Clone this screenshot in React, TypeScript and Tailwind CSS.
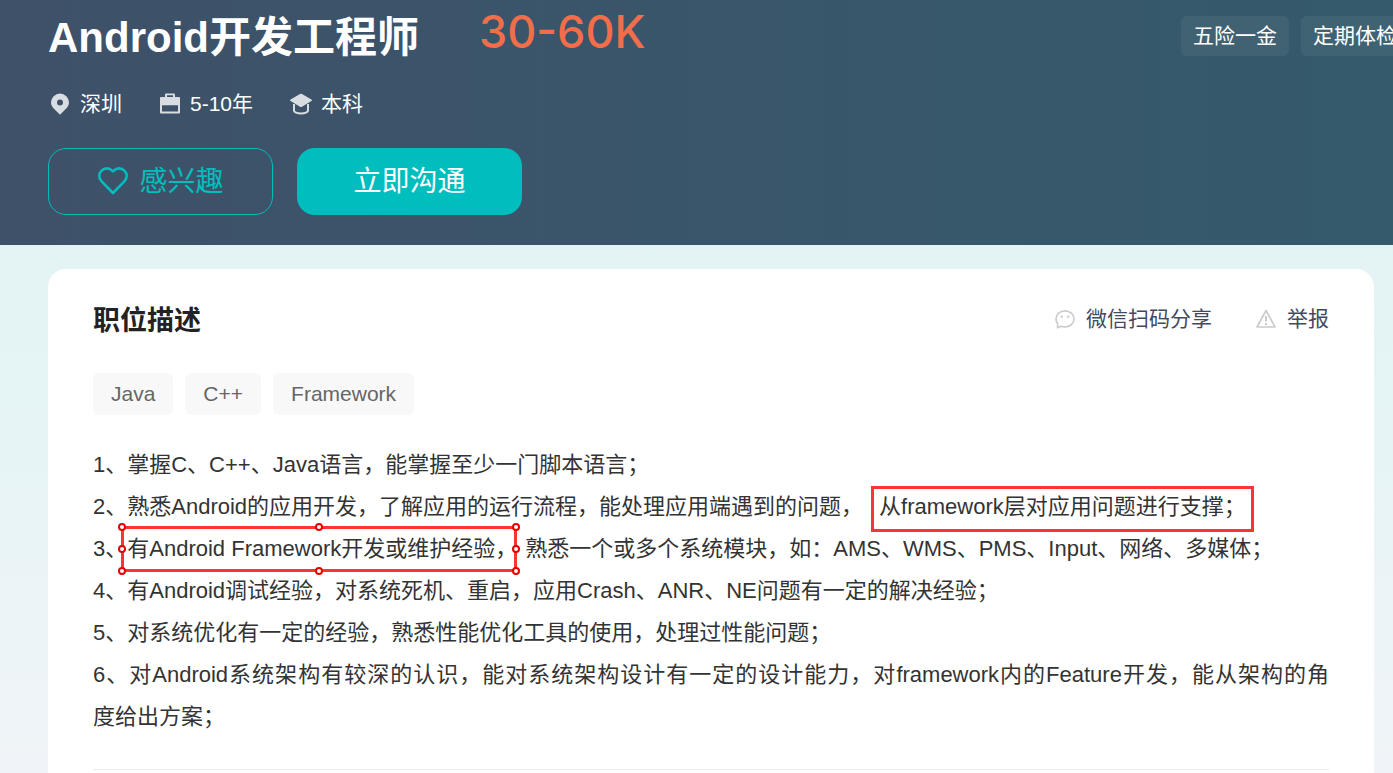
import type { ReactNode } from "react";

const benefits = ["五险一金", "定期体检"];
const skills = ["Java", "C++", "Framework"];

const handles = [
  "left-0 top-0",
  "left-1/2 top-0",
  "left-full top-0",
  "left-0 top-1/2",
  "left-full top-1/2",
  "left-0 top-full",
  "left-1/2 top-full",
  "left-full top-full",
];

function Marked({ children, active }: { children: ReactNode; active?: boolean }) {
  return (
    <span className={`relative inline-block ${active ? "mr-2" : "ml-4"}`}>
      {children}
      <span
        className={`pointer-events-none absolute border-3 border-[#fb3436] ${
          active ? "-inset-y-0.5 right-0 -left-1.5" : "-inset-x-2 top-0 -bottom-1"
        }`}
      >
        {active && (
          <span className="absolute -inset-0.5">
            {handles.map((place) => (
              <span
                key={place}
                className={`absolute size-2 -translate-1/2 rounded-full border-2 border-[#e60000] bg-white ${place}`}
              />
            ))}
          </span>
        )}
      </span>
    </span>
  );
}

function PinIcon() {
  return (
    <svg viewBox="0 0 24 24" className="size-6 fill-[#d8dde2]" aria-hidden="true">
      <path
        fillRule="evenodd"
        d="M12 1.500a9 9 0 0 0-9 9c0 4 3.500 6.800 6 9.200l3 3 3-3c2.500-2.400 6-5.200 6-9.200a9 9 0 0 0-9-9Zm0 6a3 3 0 1 1 0 6 3 3 0 0 1 0-6Z"
      />
    </svg>
  );
}

function BriefcaseIcon() {
  return (
    <svg viewBox="0 0 24 24" className="size-6 fill-[#d8dde2]" aria-hidden="true">
      <path
        fillRule="evenodd"
        d="M8 1.500h8a1 1 0 0 1 1 1V5h4a1 1 0 0 1 1 1v14.500a1 1 0 0 1-1 1H3a1 1 0 0 1-1-1V6a1 1 0 0 1 1-1h4V2.500a1 1 0 0 1 1-1ZM9 3.300V5h6V3.300H9ZM4 13.300v6.200h16v-6.200H4Z"
      />
    </svg>
  );
}

function DegreeIcon() {
  return (
    <svg viewBox="0 0 24 24" className="size-6" aria-hidden="true">
      <path
        d="M11 2a2 2 0 0 1 2 0l9.400 5.400c.7.400.7 1.200 0 1.600L13 14.800a2 2 0 0 1-2 0L1.600 9c-.7-.4-.7-1.200 0-1.600L11 2Z"
        fill="#d8dde2"
      />
      <path
        d="M5 12v6.800c0 1.200 3 2.700 7 2.700s7-1.500 7-2.700V12"
        fill="none"
        stroke="#d8dde2"
        strokeWidth="2"
      />
    </svg>
  );
}

function HeartIcon() {
  return (
    <svg viewBox="0 1 32 32" className="size-8" fill="none" stroke="#00bebd" strokeWidth="2.6" aria-hidden="true">
      <path
        d="M16 28 4.600 16.400a7.500 7.500 0 0 1 0-10.800 7.500 7.500 0 0 1 10.600 0l.8.8.8-.8a7.500 7.500 0 0 1 10.600 0 7.500 7.500 0 0 1 0 10.800L16 28Z"
        strokeLinejoin="round"
      />
    </svg>
  );
}

function ChatIcon() {
  return (
    <svg viewBox="0 0 20 20" className="size-5" fill="none" stroke="#ccc" strokeWidth="1.700" aria-hidden="true">
      <path
        d="M2.600 18.600v-4.300C1.500 12.900 1 11.500 1 9.900 1 5.400 5 1.900 10 1.900s9 3.500 9 8-4 8-9 8c-1.400 0-2.600-.2-3.700-.7l-3.700 1.400Z"
        strokeLinejoin="round"
      />
      <circle cx="6.800" cy="7.800" r="1.200" fill="#ccc" stroke="none" />
      <circle cx="13.200" cy="7.800" r="1.200" fill="#ccc" stroke="none" />
    </svg>
  );
}

function WarnIcon() {
  return (
    <svg viewBox="0 0 20 20" className="size-5" fill="none" stroke="#ccc" strokeWidth="1.700" aria-hidden="true">
      <path d="M10 1.500 19 18H1L10 1.500Z" strokeLinejoin="round" />
      <path d="M10 7v5.500M10 14v2" strokeWidth="2" />
    </svg>
  );
}

export default function App() {
  return (
    <div className="flex min-h-screen flex-col overflow-x-hidden bg-linear-to-b from-[#e0f3f6] via-[#e5f4f5] to-[#f0f4f8] font-['Liberation_Sans','Noto_Sans_CJK_SC',sans-serif]">
      <header className="flex items-start justify-between overflow-hidden bg-linear-to-r from-[#3e5169] to-[#345a6b] pb-[30px] pl-12 text-white">
        <div>
          <div className="flex items-start gap-15">
            <h1 className="pt-1.5 text-[42px] leading-16 font-bold whitespace-nowrap">Android开发工程师</h1>
            <span className="font-['Inter',sans-serif] text-[45px] leading-16 font-medium whitespace-nowrap text-[#f26d49]">
              30-60K
            </span>
          </div>
          <ul className="mt-4 flex gap-9 text-[21px] leading-9">
            <li className="flex items-center gap-2">
              <PinIcon />
              深圳
            </li>
            <li className="flex items-center gap-2">
              <BriefcaseIcon />
              5-10年
            </li>
            <li className="flex items-center gap-2">
              <DegreeIcon />
              本科
            </li>
          </ul>
          <div className="mt-[26px] flex gap-6 text-[28px]">
            <button
              type="button"
              className="flex h-[67px] w-[225px] items-center justify-center gap-2.5 rounded-[18px] border border-[#00bebd] text-[#00bebd]"
            >
              <HeartIcon />
              感兴趣
            </button>
            <button type="button" className="h-[67px] w-[225px] rounded-[18px] bg-[#00bebd]">
              立即沟通
            </button>
          </div>
        </div>
        <ul className="-mr-4 flex shrink-0 gap-3 pt-4 text-[21px] leading-10">
          {benefits.map((b) => (
            <li key={b} className="rounded-md bg-white/6 px-3">
              {b}
            </li>
          ))}
        </ul>
      </header>

      <main className="mt-6 mr-[19px] ml-12 flex-1 rounded-t-[18px] bg-white px-[45px] pt-8">
        <div className="flex items-start justify-between">
          <h2 className="text-[27px] leading-10 font-bold text-[#222]">职位描述</h2>
          <div className="flex gap-11 text-[21px] leading-9 text-[#414a60]">
            <a href="#share" className="flex items-center gap-[11px]">
              <ChatIcon />
              微信扫码分享
            </a>
            <a href="#report" className="flex items-center gap-[11px]">
              <WarnIcon />
              举报
            </a>
          </div>
        </div>
        <ul className="mt-8 flex gap-3 text-[21px] leading-[42px] text-[#666]">
          {skills.map((s) => (
            <li key={s} className="rounded-md bg-[#f8f8f8] px-[18px]">
              {s}
            </li>
          ))}
        </ul>
        <div className="mt-[29px] border-b border-[#ececec] pb-[31px] text-[22px] leading-[42px] text-[#333]">
          <p>1、掌握C、C++、Java语言，能掌握至少一门脚本语言；</p>
          <p>
            2、熟悉Android的应用开发，了解应用的运行流程，能处理应用端遇到的问题，
            <Marked>从framework层对应用问题进行支撑；</Marked>
          </p>
          <p>
            3、<Marked active>有Android Framework开发或维护经验，</Marked>
            熟悉一个或多个系统模块，如：AMS、WMS、PMS、Input、网络、多媒体；
          </p>
          <p>4、有Android调试经验，对系统死机、重启，应用Crash、ANR、NE问题有一定的解决经验；</p>
          <p>5、对系统优化有一定的经验，熟悉性能优化工具的使用，处理过性能问题；</p>
          <p>
            <span className="block [text-align-last:justify]">
              6、对Android系统架构有较深的认识，能对系统架构设计有一定的设计能力，对framework内的Feature开发，能从架构的角
            </span>
            度给出方案；
          </p>
        </div>
      </main>
    </div>
  );
}
